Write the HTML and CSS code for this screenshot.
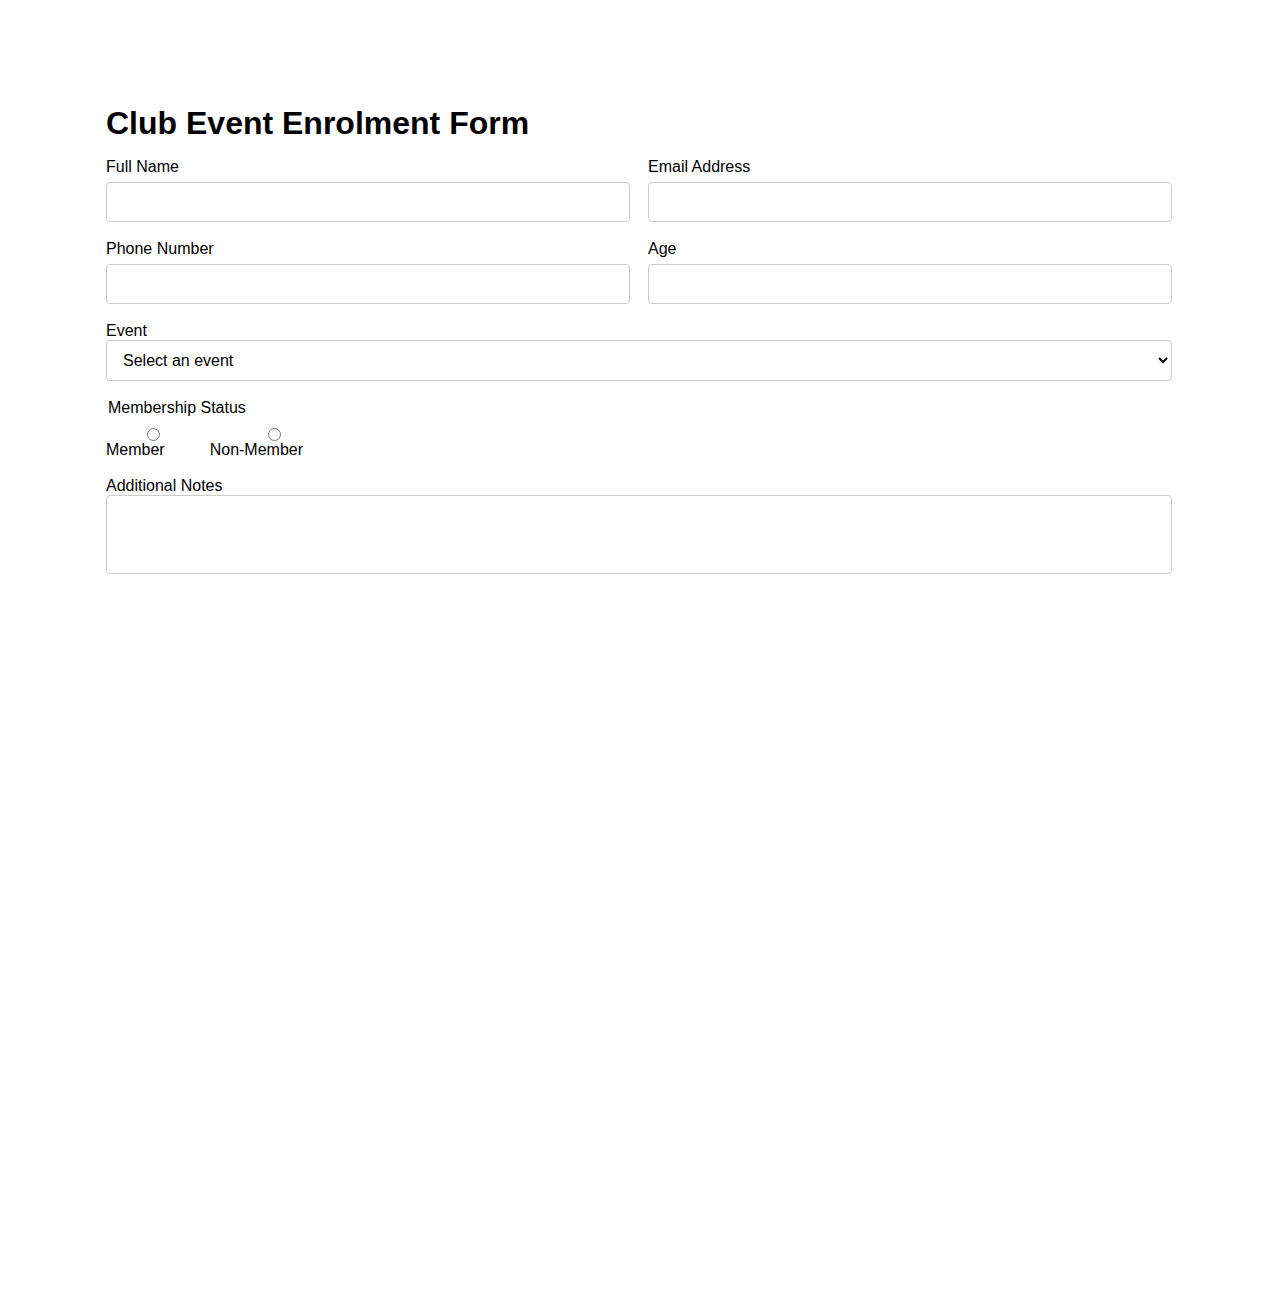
FILE: index.html
```html
<!DOCTYPE html>
<html lang="en">
<head>
  <meta charset="UTF-8">
  <title>Club Event Enrolment Form</title>
  <link rel="stylesheet" href="styles.css">
</head>
<body>

  <div class="form-wrap">
    <h1>Club Event Enrolment Form</h1>

    <form class="enrol-form">
      <div class="field-grid">
        <div class="field">
          <label for="fullName">Full Name</label>
          <input type="text" id="fullName" name="fullName">
        </div>
        <div class="field">
          <label for="email">Email Address</label>
          <input type="email" id="email" name="email">
        </div>
        <div class="field">
          <label for="phone">Phone Number</label>
          <input type="tel" id="phone" name="phone">
        </div>
        <div class="field">
          <label for="age">Age</label>
          <input type="number" id="age" name="age">
        </div>
      </div>

      <div class="field-full">
        <label for="event">Event</label>
        <select id="event" name="event">
          <option value="">Select an event</option>
          <option value="tennis">Tennis Tournament</option>
          <option value="swim">Swimming Gala</option>
          <option value="quiz">Quiz Night</option>
        </select>
      </div>

      <fieldset class="membership">
        <legend>Membership Status</legend>
        <div class="radio-group">
          <label class="radio-option"><input type="radio" name="membership" value="member">Member</label>
          <label class="radio-option"><input type="radio" name="membership" value="non-member">Non-Member</label>
        </div>
      </fieldset>

      <div class="field-full">
        <label for="notes">Additional Notes</label>
        <textarea id="notes" name="notes"></textarea>
      </div>
    </form>
  </div>

</body>
</html>
```

FILE: styles.css
```css
body {
  margin: 0;
  font-family: "Liberation Sans", Arial, sans-serif;
  font-size: 16px;
  color: #000;
  background-color: #fff;
}

.form-wrap {
  max-width: 1066px;
  margin: 0 auto;
  padding-top: 84px;
}

h1 {
  font-size: 32px;
  margin: 21px 0 16px;
}

.field-grid {
  display: grid;
  grid-template-columns: 1fr 1fr;
  gap: 18px;
  margin-bottom: 18px;
}

.field label {
  display: block;
  margin-bottom: 6px;
}

.field-full {
  margin-bottom: 18px;
}

.field-full label {
  display: block;
}

input[type="text"],
input[type="email"],
input[type="tel"],
input[type="number"],
select,
textarea {
  display: block;
  width: 100%;
  box-sizing: border-box;
  height: 40px;
  padding: 10px;
  font-family: inherit;
  font-size: 16px;
  border: 1px solid #ccc;
  border-radius: 4px;
  background-color: #fff;
  margin: 0;
}

select {
  height: 41px;
  padding: 0 12px;
  color: #000;
}

textarea {
  height: 79px;
  resize: none;
}

.membership {
  border: none;
  margin: 0 0 18px;
  padding: 0;
}

.membership legend {
  padding: 0 2px;
  margin-bottom: 8px;
}

.radio-group {
  display: flex;
  gap: 45px;
}

.radio-option {
  display: flex;
  flex-direction: column;
  align-items: center;
  cursor: pointer;
}

.radio-option input {
  margin: 3px 0 0 36px;
}
```
